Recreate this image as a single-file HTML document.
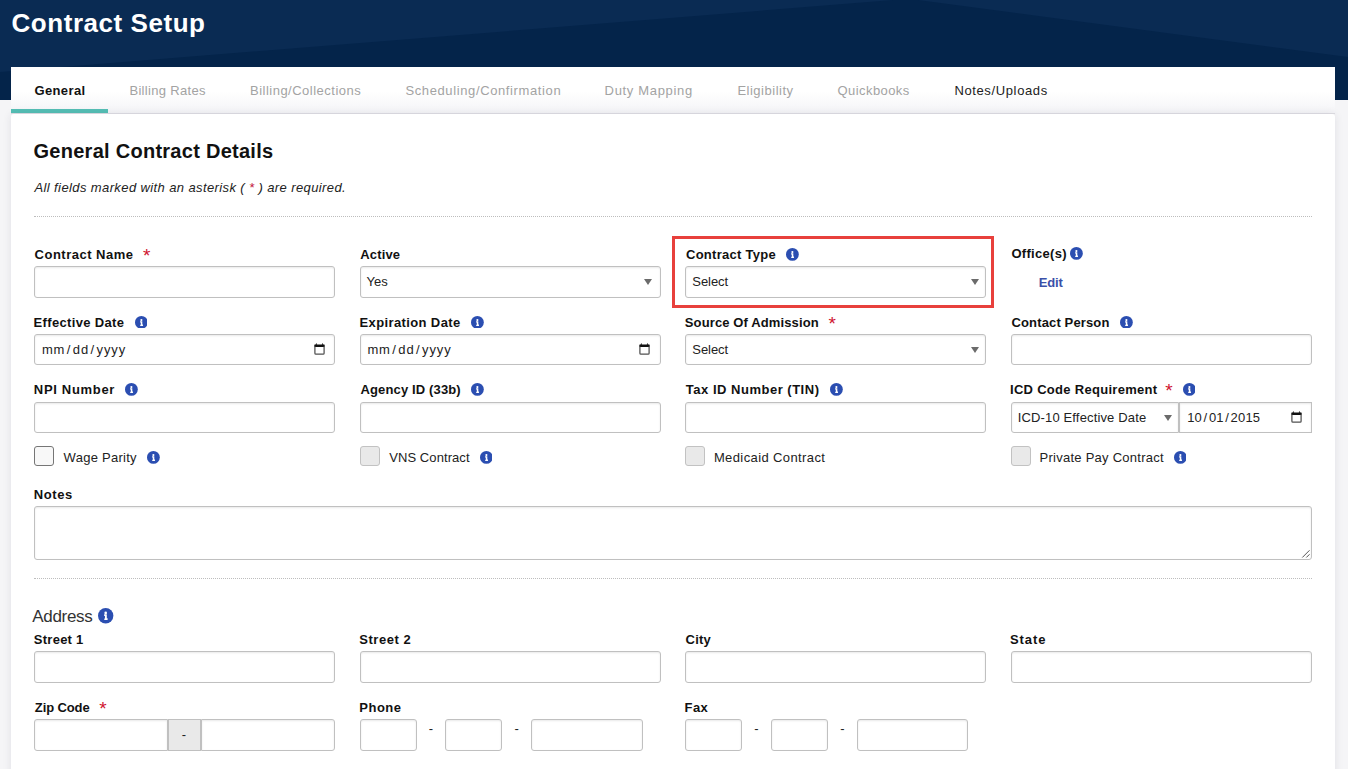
<!DOCTYPE html>
<html lang="en">
<head>
<meta charset="utf-8">
<title>Contract Setup</title>
<style>
html,body{margin:0;padding:0}
body{width:1348px;height:769px;overflow:hidden;position:relative;background:#f5f5f7;font-family:"Liberation Sans",sans-serif;font-size:13px;color:#111}
h1,h2,h3,p{margin:0;font-size:inherit;font-weight:normal}
a{text-decoration:none;color:inherit}
.abs,.t,.in,.ic,.cb{position:absolute;box-sizing:border-box}
.t{white-space:nowrap;line-height:16px;height:16px}
.hdr{position:absolute;left:0;top:0;width:1348px;height:100px;background:#04244a;overflow:hidden}
.tabs{left:11px;top:67px;width:1324px;height:47px;background:linear-gradient(#fff 0,#fff 52%,#f4f4f7 100%);border-bottom:1px solid #dfdee3}
.card{left:11px;top:114px;width:1324px;height:700px;background:#fff;border-radius:3px 3px 0 0;box-shadow:0 0 8px rgba(40,40,70,.1)}
.in{height:32px;border:1px solid #c0c0c0;border-radius:3px;background:#fff;box-shadow:inset 0 1px 2px rgba(0,0,0,.09)}
.arr{position:absolute;right:6.5px;top:12px;width:0;height:0;border-left:4px solid transparent;border-right:4px solid transparent;border-top:6px solid #6b6b6b}
.req{color:#cf1430}
.cb{width:20px;height:20px;border:1px solid #c2c2c2;border-radius:3px;background:#e9e9e9}
.dot{position:absolute;height:0;border-top:1px dotted #bdbdbd}
svg{display:block}
</style>
</head>
<body>
<header class="hdr">
<svg width="1348" height="100" viewBox="0 0 1348 100"><polygon points="0,0 893,0 0,72" fill="#0a2b53"/><polygon points="918,0 1348,0 1348,57" fill="#0a2b53"/></svg>
<h1 class="t" style="left:11.5px;top:8px;line-height:30px;height:30px;font-size:26px;font-weight:bold;letter-spacing:0.55px;color:#fff;">Contract Setup</h1>
</header>
<nav>
<div class="abs tabs"></div>
<div class="abs" style="left:11px;top:109px;width:97px;height:4px;background:#55bfb5"></div>
<a class="t" style="left:34.4px;top:83px;font-weight:bold;letter-spacing:0.39px;">General</a>
<a class="t" style="left:129.4px;top:83px;letter-spacing:0.33px;color:#a3a3a3;">Billing Rates</a>
<a class="t" style="left:250px;top:83px;letter-spacing:0.49px;color:#a3a3a3;">Billing/Collections</a>
<a class="t" style="left:405.4px;top:83px;letter-spacing:0.62px;color:#a3a3a3;">Scheduling/Confirmation</a>
<a class="t" style="left:604.6px;top:83px;letter-spacing:0.67px;color:#a3a3a3;">Duty Mapping</a>
<a class="t" style="left:737.4px;top:83px;letter-spacing:0.51px;color:#a3a3a3;">Eligibility</a>
<a class="t" style="left:837.5px;top:83px;letter-spacing:0.43px;color:#a3a3a3;">Quickbooks</a>
<a class="t" style="left:954.4px;top:83px;letter-spacing:0.63px;color:#222;">Notes/Uploads</a>
</nav>
<main>
<div class="abs card"></div>
<h2 class="t" style="left:33.5px;top:139px;line-height:24px;height:24px;font-size:20px;font-weight:bold;letter-spacing:0.27px;">General Contract Details</h2>
<p class="t" style="left:34.5px;top:180px;font-style:italic;letter-spacing:0.39px;color:#222;">All fields marked with an asterisk ( <span style="color:#c2143c">*</span> ) are required.</p>
<div class="dot" style="left:34px;top:216px;width:1278px"></div>
<section>
<div class="fld">
<label class="t" style="left:34.6px;top:247px;font-weight:bold;letter-spacing:0.49px;">Contract Name</label>
<div class="t req" style="left:142.9px;top:246px;font-size:19px;line-height:20px;height:20px">*</div>
<div class="in" style="left:34px;top:266px;width:301px;"></div>
</div>
<div class="fld">
<label class="t" style="left:360.3px;top:247px;font-weight:bold;letter-spacing:0.14px;">Active</label>
<div class="in" style="left:360px;top:266px;width:301px;"><span class="arr" style="right:7.6px"></span></div>
<span class="t" style="left:366.5px;top:274px;color:#222;">Yes</span>
</div>
<div class="abs" style="left:672px;top:236px;width:322px;height:72px;border:3px solid #e8403c"></div>
<div class="fld">
<label class="t" style="left:686px;top:247px;font-weight:bold;letter-spacing:0.27px;">Contract Type</label>
<svg class="ic" style="left:786.0px;top:247.9px" width="12.8" height="12.8" viewBox="8 8 496 496"><circle cx="256" cy="256" r="248" fill="#2b4eb1"/><circle cx="256" cy="166" r="42" fill="#fff"/><path d="M216 352h16v-88h-16c-6.600 0-12-5.400-12-12v-28c0-6.600 5.400-12 12-12h64c6.600 0 12 5.400 12 12v116h16c6.600 0 12 5.400 12 12v28c0 6.600-5.400 12-12 12h-88c-6.600 0-12-5.400-12-12v-28c0-6.600 5.400-12 12-12z" fill="#fff"/></svg>
<div class="in" style="left:685px;top:266px;width:301px;"><span class="arr"></span></div>
<span class="t" style="left:692.3px;top:274px;letter-spacing:-0.06px;color:#222;">Select</span>
</div>
<div class="fld">
<label class="t" style="left:1011.4px;top:246px;font-weight:bold;letter-spacing:0.31px;">Office(s)</label>
<svg class="ic" style="left:1070.2px;top:247.0px" width="12.8" height="12.8" viewBox="8 8 496 496"><circle cx="256" cy="256" r="248" fill="#2b4eb1"/><circle cx="256" cy="166" r="42" fill="#fff"/><path d="M216 352h16v-88h-16c-6.600 0-12-5.400-12-12v-28c0-6.600 5.400-12 12-12h64c6.600 0 12 5.400 12 12v116h16c6.600 0 12 5.400 12 12v28c0 6.600-5.400 12-12 12h-88c-6.600 0-12-5.400-12-12v-28c0-6.600 5.400-12 12-12z" fill="#fff"/></svg>
<a class="t" style="left:1038.7px;top:275px;font-weight:bold;letter-spacing:-0.1px;color:#3b50a8;">Edit</a>
</div>
<div class="fld">
<label class="t" style="left:33.6px;top:315px;font-weight:bold;letter-spacing:0.34px;">Effective Date</label>
<svg class="ic" style="left:134.7px;top:315.7px" width="12.8" height="12.8" viewBox="8 8 496 496"><circle cx="256" cy="256" r="248" fill="#2b4eb1"/><circle cx="256" cy="166" r="42" fill="#fff"/><path d="M216 352h16v-88h-16c-6.600 0-12-5.400-12-12v-28c0-6.600 5.400-12 12-12h64c6.600 0 12 5.400 12 12v116h16c6.600 0 12 5.400 12 12v28c0 6.600-5.400 12-12 12h-88c-6.600 0-12-5.400-12-12v-28c0-6.600 5.400-12 12-12z" fill="#fff"/></svg>
<div class="in" style="left:34px;top:334px;width:301px;height:31px;"></div>
<span class="t" style="left:41.9px;top:342px;letter-spacing:0.88px;color:#222;">mm<span style="padding:0 1.5px">/</span>dd<span style="padding:0 1.5px">/</span>yyyy</span>
<svg class="ic" style="left:314px;top:343px" width="11" height="12" viewBox="0 0 11 12"><path d="M1.500 1.700L2.300 0L3.200 1.700zM7.700 1.700L8.600 0L9.400 1.700z" fill="#111"/><rect x="0.300" y="1.400" width="10.400" height="2.600" rx=".5" fill="#111"/><path d="M0.900 3.500V10.200Q0.900 11.200 1.900 11.200H9.100Q10.100 11.200 10.100 10.200V3.500" fill="none" stroke="#505050" stroke-width="1.250"/></svg>
</div>
<div class="fld">
<label class="t" style="left:359.5px;top:315px;font-weight:bold;letter-spacing:0.38px;">Expiration Date</label>
<svg class="ic" style="left:470.9px;top:315.7px" width="12.8" height="12.8" viewBox="8 8 496 496"><circle cx="256" cy="256" r="248" fill="#2b4eb1"/><circle cx="256" cy="166" r="42" fill="#fff"/><path d="M216 352h16v-88h-16c-6.600 0-12-5.400-12-12v-28c0-6.600 5.400-12 12-12h64c6.600 0 12 5.400 12 12v116h16c6.600 0 12 5.400 12 12v28c0 6.600-5.400 12-12 12h-88c-6.600 0-12-5.400-12-12v-28c0-6.600 5.400-12 12-12z" fill="#fff"/></svg>
<div class="in" style="left:360px;top:334px;width:301px;height:31px;"></div>
<span class="t" style="left:367.4px;top:342px;letter-spacing:0.88px;color:#222;">mm<span style="padding:0 1.5px">/</span>dd<span style="padding:0 1.5px">/</span>yyyy</span>
<svg class="ic" style="left:639px;top:343px" width="11" height="12" viewBox="0 0 11 12"><path d="M1.500 1.700L2.300 0L3.200 1.700zM7.700 1.700L8.600 0L9.400 1.700z" fill="#111"/><rect x="0.300" y="1.400" width="10.400" height="2.600" rx=".5" fill="#111"/><path d="M0.900 3.500V10.200Q0.900 11.200 1.900 11.200H9.100Q10.100 11.200 10.100 10.200V3.500" fill="none" stroke="#505050" stroke-width="1.250"/></svg>
</div>
<div class="fld">
<label class="t" style="left:684.8px;top:315px;font-weight:bold;letter-spacing:0.12px;">Source Of Admission</label>
<div class="t req" style="left:828.5px;top:314px;font-size:19px;line-height:20px;height:20px">*</div>
<div class="in" style="left:685px;top:334px;width:301px;height:31px;"><span class="arr"></span></div>
<span class="t" style="left:692.3px;top:342px;letter-spacing:-0.06px;color:#222;">Select</span>
</div>
<div class="fld">
<label class="t" style="left:1011.5px;top:315px;font-weight:bold;letter-spacing:0.14px;">Contact Person</label>
<svg class="ic" style="left:1120.0px;top:315.7px" width="12.8" height="12.8" viewBox="8 8 496 496"><circle cx="256" cy="256" r="248" fill="#2b4eb1"/><circle cx="256" cy="166" r="42" fill="#fff"/><path d="M216 352h16v-88h-16c-6.600 0-12-5.400-12-12v-28c0-6.600 5.400-12 12-12h64c6.600 0 12 5.400 12 12v116h16c6.600 0 12 5.400 12 12v28c0 6.600-5.400 12-12 12h-88c-6.600 0-12-5.400-12-12v-28c0-6.600 5.400-12 12-12z" fill="#fff"/></svg>
<div class="in" style="left:1011px;top:334px;width:301px;height:31px;"></div>
</div>
<div class="fld">
<label class="t" style="left:33.8px;top:382px;font-weight:bold;letter-spacing:0.69px;">NPI Number</label>
<svg class="ic" style="left:124.8px;top:382.9px" width="12.8" height="12.8" viewBox="8 8 496 496"><circle cx="256" cy="256" r="248" fill="#2b4eb1"/><circle cx="256" cy="166" r="42" fill="#fff"/><path d="M216 352h16v-88h-16c-6.600 0-12-5.400-12-12v-28c0-6.600 5.400-12 12-12h64c6.600 0 12 5.400 12 12v116h16c6.600 0 12 5.400 12 12v28c0 6.600-5.400 12-12 12h-88c-6.600 0-12-5.400-12-12v-28c0-6.600 5.400-12 12-12z" fill="#fff"/></svg>
<div class="in" style="left:34px;top:402px;width:301px;height:31px;"></div>
</div>
<div class="fld">
<label class="t" style="left:360.5px;top:382px;font-weight:bold;letter-spacing:0.14px;">Agency ID (33b)</label>
<svg class="ic" style="left:471.3px;top:382.9px" width="12.8" height="12.8" viewBox="8 8 496 496"><circle cx="256" cy="256" r="248" fill="#2b4eb1"/><circle cx="256" cy="166" r="42" fill="#fff"/><path d="M216 352h16v-88h-16c-6.600 0-12-5.400-12-12v-28c0-6.600 5.400-12 12-12h64c6.600 0 12 5.400 12 12v116h16c6.600 0 12 5.400 12 12v28c0 6.600-5.400 12-12 12h-88c-6.600 0-12-5.400-12-12v-28c0-6.600 5.400-12 12-12z" fill="#fff"/></svg>
<div class="in" style="left:360px;top:402px;width:301px;height:31px;"></div>
</div>
<div class="fld">
<label class="t" style="left:685.8px;top:382px;font-weight:bold;letter-spacing:0.51px;">Tax ID Number (TIN)</label>
<svg class="ic" style="left:829.8px;top:382.9px" width="12.8" height="12.8" viewBox="8 8 496 496"><circle cx="256" cy="256" r="248" fill="#2b4eb1"/><circle cx="256" cy="166" r="42" fill="#fff"/><path d="M216 352h16v-88h-16c-6.600 0-12-5.400-12-12v-28c0-6.600 5.400-12 12-12h64c6.600 0 12 5.400 12 12v116h16c6.600 0 12 5.400 12 12v28c0 6.600-5.400 12-12 12h-88c-6.600 0-12-5.400-12-12v-28c0-6.600 5.400-12 12-12z" fill="#fff"/></svg>
<div class="in" style="left:685px;top:402px;width:301px;height:31px;"></div>
</div>
<div class="fld">
<label class="t" style="left:1010px;top:382px;font-weight:bold;letter-spacing:0.29px;">ICD Code Requirement</label>
<div class="t req" style="left:1165.3px;top:381px;font-size:19px;line-height:20px;height:20px">*</div>
<svg class="ic" style="left:1182.6px;top:382.9px" width="12.8" height="12.8" viewBox="8 8 496 496"><circle cx="256" cy="256" r="248" fill="#2b4eb1"/><circle cx="256" cy="166" r="42" fill="#fff"/><path d="M216 352h16v-88h-16c-6.600 0-12-5.400-12-12v-28c0-6.600 5.400-12 12-12h64c6.600 0 12 5.400 12 12v116h16c6.600 0 12 5.400 12 12v28c0 6.600-5.400 12-12 12h-88c-6.600 0-12-5.400-12-12v-28c0-6.600 5.400-12 12-12z" fill="#fff"/></svg>
<div class="in" style="left:1011px;top:402px;width:168px;height:31px;border-radius:3px 0 0 3px"><span class="arr" style="right:6.5px"></span></div>
<span class="t" style="left:1017.7px;top:410px;letter-spacing:0.15px;color:#222;">ICD-10 Effective Date</span>
<div class="in" style="left:1179px;top:402px;width:132.5px;height:31px;border-radius:0"></div>
<span class="t" style="left:1187.2px;top:410px;letter-spacing:0.2px;color:#222;">10<span style="padding:0 1.5px">/</span>01<span style="padding:0 1.5px">/</span>2015</span>
<svg class="ic" style="left:1291px;top:411px" width="11" height="12" viewBox="0 0 11 12"><path d="M1.500 1.700L2.300 0L3.200 1.700zM7.700 1.700L8.600 0L9.400 1.700z" fill="#111"/><rect x="0.300" y="1.400" width="10.400" height="2.600" rx=".5" fill="#111"/><path d="M0.900 3.500V10.200Q0.900 11.200 1.900 11.200H9.100Q10.100 11.200 10.100 10.200V3.500" fill="none" stroke="#505050" stroke-width="1.250"/></svg>
</div>
<div class="fld">
<div class="cb" style="left:34px;top:446px;background:#f8f8f8;border-color:#767676"></div>
<label class="t" style="left:63.6px;top:450px;letter-spacing:0.27px;color:#222;">Wage Parity</label>
<svg class="ic" style="left:146.8px;top:450.9px" width="12.8" height="12.8" viewBox="8 8 496 496"><circle cx="256" cy="256" r="248" fill="#2b4eb1"/><circle cx="256" cy="166" r="42" fill="#fff"/><path d="M216 352h16v-88h-16c-6.600 0-12-5.400-12-12v-28c0-6.600 5.400-12 12-12h64c6.600 0 12 5.400 12 12v116h16c6.600 0 12 5.400 12 12v28c0 6.600-5.400 12-12 12h-88c-6.600 0-12-5.400-12-12v-28c0-6.600 5.400-12 12-12z" fill="#fff"/></svg>
</div>
<div class="fld">
<div class="cb" style="left:360px;top:446px;"></div>
<label class="t" style="left:389.2px;top:450px;letter-spacing:0.08px;color:#222;">VNS Contract</label>
<svg class="ic" style="left:479.6px;top:450.9px" width="12.8" height="12.8" viewBox="8 8 496 496"><circle cx="256" cy="256" r="248" fill="#2b4eb1"/><circle cx="256" cy="166" r="42" fill="#fff"/><path d="M216 352h16v-88h-16c-6.600 0-12-5.400-12-12v-28c0-6.600 5.400-12 12-12h64c6.600 0 12 5.400 12 12v116h16c6.600 0 12 5.400 12 12v28c0 6.600-5.400 12-12 12h-88c-6.600 0-12-5.400-12-12v-28c0-6.600 5.400-12 12-12z" fill="#fff"/></svg>
</div>
<div class="fld">
<div class="cb" style="left:685px;top:446px;"></div>
<label class="t" style="left:713.9px;top:450px;letter-spacing:0.39px;color:#222;">Medicaid Contract</label>
</div>
<div class="fld">
<div class="cb" style="left:1011px;top:446px;"></div>
<label class="t" style="left:1039.6px;top:450px;letter-spacing:0.25px;color:#222;">Private Pay Contract</label>
<svg class="ic" style="left:1173.6px;top:450.9px" width="12.8" height="12.8" viewBox="8 8 496 496"><circle cx="256" cy="256" r="248" fill="#2b4eb1"/><circle cx="256" cy="166" r="42" fill="#fff"/><path d="M216 352h16v-88h-16c-6.600 0-12-5.400-12-12v-28c0-6.600 5.400-12 12-12h64c6.600 0 12 5.400 12 12v116h16c6.600 0 12 5.400 12 12v28c0 6.600-5.400 12-12 12h-88c-6.600 0-12-5.400-12-12v-28c0-6.600 5.400-12 12-12z" fill="#fff"/></svg>
</div>
<div class="fld">
<label class="t" style="left:33.8px;top:487px;font-weight:bold;letter-spacing:0.6px;">Notes</label>
<div class="in" style="left:34px;top:506px;width:1278px;height:54px"><svg style="position:absolute;right:1px;bottom:1px" width="10" height="10" viewBox="0 0 10 10"><path d="M9.5 2.300L2.300 9.500M9.500 6.300L6.300 9.500" stroke="#555" stroke-width="1" fill="none"/></svg></div>
</div>
</section>
<div class="dot" style="left:34px;top:578px;width:1278px"></div>
<section>
<h3 class="t" style="left:32.3px;top:606px;line-height:22px;height:22px;font-size:17px;letter-spacing:-0.33px;color:#333;">Address</h3>
<svg class="ic" style="left:98.3px;top:608.3px" width="15.4" height="15.4" viewBox="8 8 496 496"><circle cx="256" cy="256" r="248" fill="#2b4eb1"/><circle cx="256" cy="166" r="42" fill="#fff"/><path d="M216 352h16v-88h-16c-6.600 0-12-5.400-12-12v-28c0-6.600 5.400-12 12-12h64c6.600 0 12 5.400 12 12v116h16c6.600 0 12 5.400 12 12v28c0 6.600-5.400 12-12 12h-88c-6.600 0-12-5.400-12-12v-28c0-6.600 5.400-12 12-12z" fill="#fff"/></svg>
<div class="fld">
<label class="t" style="left:33.8px;top:632px;font-weight:bold;letter-spacing:0.26px;">Street 1</label>
<div class="in" style="left:34px;top:651px;width:301px;"></div>
</div>
<div class="fld">
<label class="t" style="left:359.3px;top:632px;font-weight:bold;letter-spacing:0.53px;">Street 2</label>
<div class="in" style="left:360px;top:651px;width:301px;"></div>
</div>
<div class="fld">
<label class="t" style="left:685.6px;top:632px;font-weight:bold;letter-spacing:0.2px;">City</label>
<div class="in" style="left:685px;top:651px;width:301px;"></div>
</div>
<div class="fld">
<label class="t" style="left:1010px;top:632px;font-weight:bold;letter-spacing:0.9px;">State</label>
<div class="in" style="left:1011px;top:651px;width:301px;"></div>
</div>
<div class="fld">
<label class="t" style="left:34.8px;top:700px;font-weight:bold;letter-spacing:-0.11px;">Zip Code</label>
<div class="t req" style="left:99.3px;top:699px;font-size:19px;line-height:20px;height:20px">*</div>
<div class="in" style="left:34px;top:719px;width:134px;border-radius:3px 0 0 3px"></div>
<div class="in" style="left:168px;top:719px;width:33px;border-radius:0;background:#e9e9e9;box-shadow:none"></div>
<span class="t" style="left:181.8px;top:727px;color:#222">-</span>
<div class="in" style="left:201px;top:719px;width:134px;border-radius:0 3px 3px 0"></div>
</div>
<div class="fld">
<label class="t" style="left:359.3px;top:700px;font-weight:bold;letter-spacing:0.5px;">Phone</label>
<div class="in" style="left:360px;top:719px;width:57px;"></div>
<span class="t" style="left:428.8px;top:721px;color:#222">-</span>
<div class="in" style="left:445px;top:719px;width:57px;"></div>
<span class="t" style="left:514.5px;top:721px;color:#222">-</span>
<div class="in" style="left:531px;top:719px;width:112px;"></div>
</div>
<div class="fld">
<label class="t" style="left:684.6px;top:700px;font-weight:bold;letter-spacing:0.4px;">Fax</label>
<div class="in" style="left:685px;top:719px;width:57px;"></div>
<span class="t" style="left:754.3px;top:721px;color:#222">-</span>
<div class="in" style="left:771px;top:719px;width:57px;"></div>
<span class="t" style="left:840.3px;top:721px;color:#222">-</span>
<div class="in" style="left:857px;top:719px;width:111px;"></div>
</div>
</section>
</main>
</body>
</html>
